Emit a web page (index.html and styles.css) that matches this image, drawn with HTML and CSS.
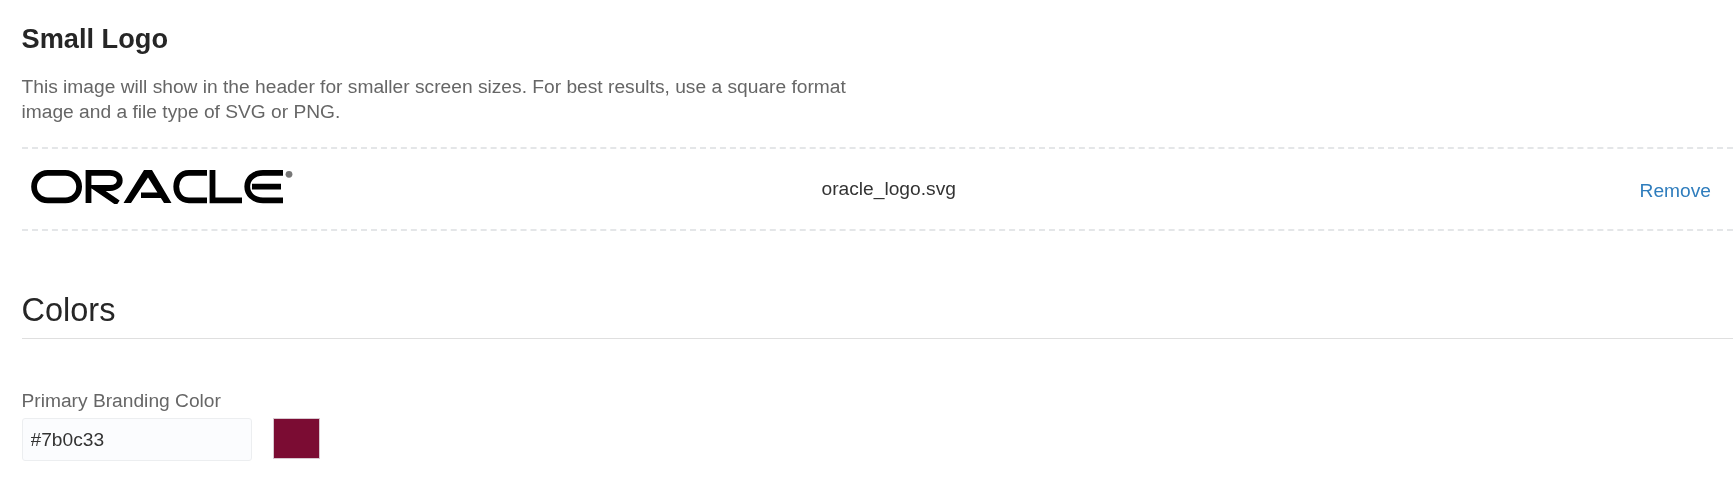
FILE: index.html
```html
<!DOCTYPE html>
<html lang="en">
<head>
<meta charset="utf-8">
<title>Branding</title>
<link rel="stylesheet" href="styles.css">
</head>
<body>
<main class="page">
  <h3 class="sub-title">Small Logo</h3>
  <p class="hint">This image will show in the header for smaller screen sizes. For best results, use a square format<br>image and a file type of SVG or PNG.</p>
  <div class="file-row">
    <svg class="logo" viewBox="0 0 262 34" width="262" height="34" role="img" aria-label="Oracle">
      <g fill="none" stroke="#000" stroke-width="5.8">
        <rect x="3.100" y="2.900" width="45" height="27.500" rx="13.700"/>
        <path d="M57.500 33V2.900H79C92 2.900 92 18 79 18H65L87 33"/>
        <path d="M176 2.900H158C141 2.900 141 30.300 158 30.300H176"/>
        <path d="M181.500 0V30.300H211"/>
        <path d="M252 2.900H232C211 2.900 211 30.300 232 30.300H252M221 16.700H250"/>
      </g>
      <path d="M92.500 33L113 0H121L140.500 33H133L117 7.500L100 33ZM110 22.500H127L130 28H110Z" fill="#000"/>
      <circle cx="258" cy="4.300" r="3.400" fill="#777"/>
    </svg>
    <span class="file-name">oracle_logo.svg</span>
    <a class="remove" href="#">Remove</a>
  </div>
  <h2 class="section-title">Colors</h2>
  <label class="field-label" for="primary">Primary Branding Color</label>
  <div class="color-row">
    <input class="color-input" id="primary" type="text" value="#7b0c33">
    <span class="swatch"></span>
  </div>
</main>
</body>
</html>
```
FILE: styles.css
```css
html, body {
  margin: 0;
  padding: 0;
  background: #fff;
}
body {
  font-family: "Liberation Sans", Arial, sans-serif;
  color: #333;
  overflow: hidden;
}
.page {
  padding: 24px 0 0 21.500px;
  filter: blur(0.45px);
}
.sub-title {
  margin: 0;
  font-size: 27.200px;
  line-height: 30px;
  font-weight: 700;
  color: #262626;
}
.hint {
  margin: 21px 0 0;
  font-size: 19.200px;
  line-height: 24.500px;
  color: #666;
}
.file-row {
  display: grid;
  grid-template-columns: 800px 1fr auto;
  align-items: center;
  box-sizing: border-box;
  height: 84px;
  margin-top: 23px;
  padding-right: 22px;
  border-top: 2px dashed #e4e6e8;
  border-bottom: 2px dashed #e4e6e8;
}
.logo {
  display: block;
  margin: 0 0 4px 9px;
}
.file-name {
  font-size: 19.200px;
  color: #333;
  margin-bottom: 1px;
}
.remove {
  font-size: 19.200px;
  color: #2f7dbd;
  text-decoration: none;
  margin-top: 3px;
}
.section-title {
  margin: 61px 0 0;
  padding-bottom: 10px;
  font-size: 32.500px;
  line-height: 36px;
  font-weight: 400;
  color: #262626;
  border-bottom: 1px solid #dfdfdf;
}
.field-label {
  display: block;
  margin-top: 52px;
  font-size: 19.200px;
  line-height: 20px;
  color: #666;
}
.color-row {
  display: flex;
  align-items: flex-start;
  gap: 21px;
  margin-top: 7px;
}
.color-input {
  box-sizing: border-box;
  width: 230px;
  height: 43px;
  padding: 0 8px;
  border: 1px solid #eceef0;
  border-radius: 3px;
  background: #fbfcfe;
  font-family: inherit;
  font-size: 19.200px;
  color: #333;
}
.swatch {
  box-sizing: border-box;
  width: 47px;
  height: 41px;
  background: #7b0c33;
  border: 1px solid #d8c8d0;
}
```
